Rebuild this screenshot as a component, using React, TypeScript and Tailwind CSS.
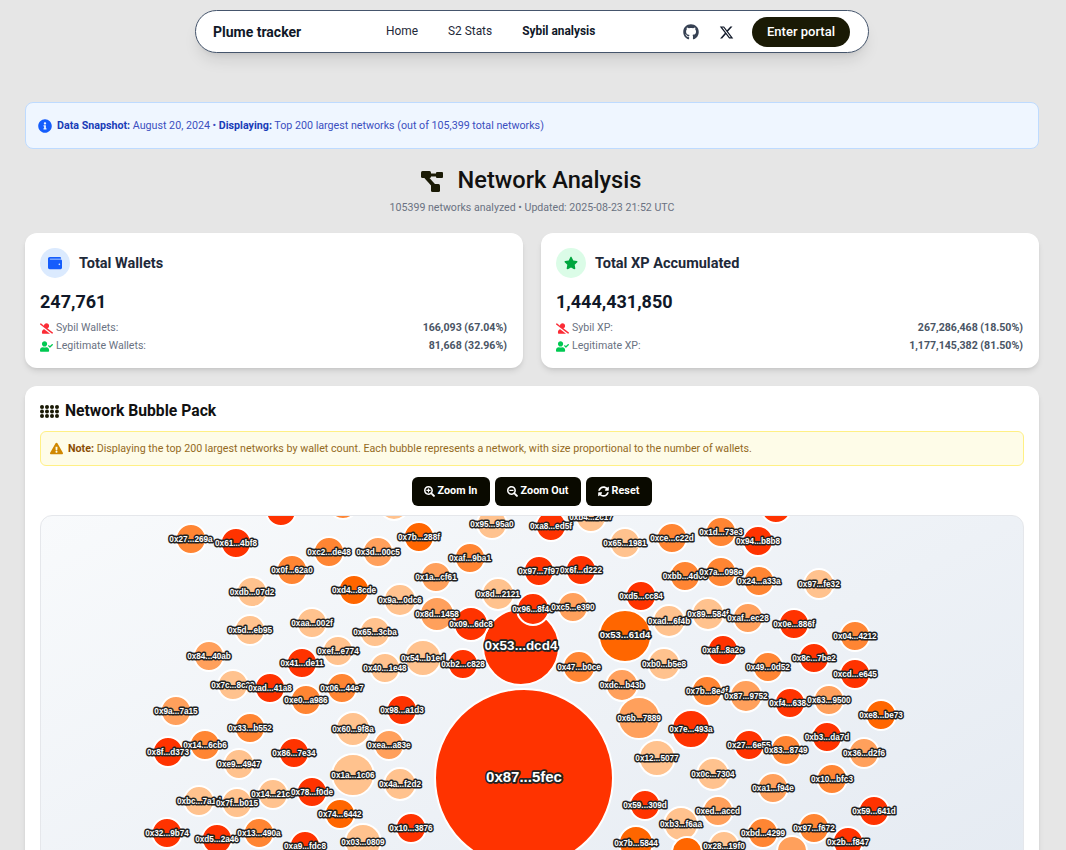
import React from 'react';
import {
  FaExclamationTriangle,
  FaGithub,
  FaInfoCircle,
  FaSearchMinus,
  FaSearchPlus,
  FaStar,
  FaSyncAlt,
  FaUserCheck,
  FaUserSlash,
  FaWallet,
} from 'react-icons/fa';
import { FaXTwitter } from 'react-icons/fa6';

const colors = ['#ff3300', '#ff6600', '#ff8533', '#ffa05c', '#ffc28e'];

// label, cx, cy, r, colour index, font size
type Bubble = [string, number, number, number, number, number?];

const bubbles: Bubble[] = [
  ['', 281, 511, 15, 0],
  ['', 343, 504, 15, 2],
  ['', 394, 505, 15, 4],
  ['', 776, 508, 15, 0],
  ['0x87...5fec', 524, 778, 89, 0, 15],
  ['0x53...dcd4', 521, 647, 38, 0, 13.5],
  ['0x53...61d4', 625, 636, 26, 1, 9.5],
  ['0x27...269a', 191, 539, 15, 2],
  ['0x61...4bf8', 236, 543, 15, 0],
  ['0xc2...de48', 329, 552, 15, 2],
  ['0x3d...00c5', 378, 552, 15, 3],
  ['0x7b...288f', 419, 537, 15, 1],
  ['0x95...95a0', 492, 524, 15, 4],
  ['0xaf...9ba1', 470, 558, 15, 2],
  ['0x0f...62a0', 292, 570, 15, 2],
  ['0x1a...cf61', 436, 577, 15, 3],
  ['0x97...7f97', 539, 571, 15, 0],
  ['0xdb...07d2', 252, 592, 15, 4],
  ['0xd4...8cde', 354, 590, 15, 1],
  ['0x9a...0dc6', 400, 600, 16, 4],
  ['0x8d...2121', 498, 594, 16, 4],
  ['0x8d...1458', 437, 614, 17, 3],
  ['0x09...6dc8', 471, 624, 17, 0],
  ['0x96...8f4e', 533, 609, 16, 0],
  ['0xaa...002f', 312, 623, 15, 4],
  ['0x5d...eb95', 250, 630, 15, 4],
  ['0x65...3cba', 375, 632, 15, 4],
  ['0x84...40ab', 209, 656, 15, 3],
  ['0xef...e774', 338, 651, 15, 4],
  ['0x41...de11', 302, 663, 15, 0],
  ['0x54...b1ed', 423, 658, 18, 4],
  ['0x40...1e48', 385, 668, 15, 4],
  ['0xb2...c828', 463, 664, 15, 0],
  ['0x7c...8c29', 233, 685, 15, 4],
  ['0xad...41a8', 270, 688, 15, 0],
  ['0x06...44e7', 342, 688, 15, 2],
  ['0xe0...a986', 306, 700, 15, 2],
  ['0x9a...7a15', 176, 711, 15, 3],
  ['0x98...a1d3', 402, 710, 15, 0],
  ['0x33...b552', 250, 728, 15, 2],
  ['0x60...9f8a', 353, 729, 17, 4],
  ['0xea...a83e', 389, 745, 15, 3],
  ['0x14...6cb6', 205, 745, 15, 2],
  ['0x8f...d373', 168, 752, 15, 0],
  ['0x86...7e34', 294, 753, 15, 0],
  ['0xe9...4947', 239, 764, 15, 4],
  ['0x1a...1c06', 353, 775, 21, 4],
  ['0x4a...f2d2', 400, 784, 16, 4],
  ['0x14...21c0', 273, 794, 15, 4],
  ['0x78...f0de', 312, 792, 15, 0],
  ['0xbc...7a1d', 199, 801, 15, 4],
  ['0x7f...b015', 237, 803, 15, 4],
  ['0x74...6442', 340, 814, 15, 1],
  ['0x10...3876', 411, 828, 15, 0],
  ['0x32...9b74', 167, 833, 15, 0],
  ['0xd5...2a46', 217, 839, 15, 0],
  ['0x13...490a', 259, 833, 15, 2],
  ['0x03...0809', 363, 842, 18, 4],
  ['0xa9...fdc8', 305, 846, 15, 0],
  ['0xa8...ed5f', 551, 526, 15, 0],
  ['0xb4...2c17', 591, 517, 15, 4],
  ['0x65...1981', 625, 543, 15, 4],
  ['0xce...c22d', 672, 538, 15, 2],
  ['0x1d...73e3', 721, 532, 15, 2],
  ['0x94...b8b8', 758, 541, 15, 0],
  ['0x6f...d222', 581, 570, 15, 0],
  ['0xbb...4d0c', 685, 576, 15, 2],
  ['0x7a...098e', 721, 572, 15, 2],
  ['0x24...a33a', 759, 581, 15, 2],
  ['0x97...fe32', 819, 584, 15, 4],
  ['0xd5...cc84', 641, 596, 15, 0],
  ['0xc5...e390', 573, 607, 15, 3],
  ['0xad...6f4b', 669, 621, 16, 4],
  ['0x89...584f', 708, 614, 16, 4],
  ['0xaf...ec28', 748, 618, 15, 3],
  ['0x0e...886f', 794, 624, 15, 0],
  ['0x04...4212', 855, 636, 15, 2],
  ['0xaf...8a2c', 723, 650, 15, 0],
  ['0xb0...b5e8', 664, 664, 16, 4],
  ['0x47...b0ce', 579, 667, 16, 2],
  ['0x49...0d52', 768, 667, 15, 2],
  ['0x8c...7be2', 814, 658, 15, 0],
  ['0xcd...e645', 855, 674, 15, 0],
  ['0xdc...b43b', 622, 685, 16, 3],
  ['0x7b...8e4f', 707, 691, 15, 2],
  ['0x87...9752', 746, 696, 16, 3],
  ['0xf4...638c', 790, 703, 15, 0],
  ['0x63...9500', 829, 700, 15, 3],
  ['0xe8...be73', 881, 715, 15, 1],
  ['0x6b...7889', 639, 718, 21, 3],
  ['0x7e...493a', 691, 729, 19, 0],
  ['0x27...6e55', 749, 745, 15, 0],
  ['0x83...8749', 786, 750, 15, 2],
  ['0xb3...da7d', 827, 737, 15, 0],
  ['0x36...d2f6', 864, 753, 15, 3],
  ['0x12...5077', 657, 758, 18, 4],
  ['0x0c...7304', 713, 774, 16, 4],
  ['0x10...bfc3', 832, 779, 15, 2],
  ['0xa1...f94e', 773, 788, 15, 3],
  ['0x59...309d', 645, 805, 15, 0],
  ['0x59...641d', 874, 811, 15, 0],
  ['0xed...accd', 718, 811, 15, 3],
  ['0xb3...f6aa', 681, 824, 17, 4],
  ['0xbd...4299', 763, 833, 15, 2],
  ['0x97...f672', 814, 828, 15, 2],
  ['0x2b...f847', 848, 842, 15, 0],
  ['0x7b...5844', 636, 843, 17, 1],
  ['0x28...19f0', 724, 846, 15, 4],
  ['', 687, 852, 15, 1],
  ['', 792, 851, 15, 3],
];

const BubbleChart: React.FC = () => (
  <svg viewBox="41 516 982 498" className="block w-[982px] h-[498px]">
    {bubbles.map(([label, x, y, r, c], i) => (
      <circle key={i} cx={x} cy={y} r={r} fill={colors[c]} stroke="#ffffff" strokeWidth={2} />
    ))}
    {bubbles.map(([label, x, y, , , size], i) =>
      label ? (
        <text
          key={i}
          x={x}
          y={size ? y - 1.5 : y}
          textAnchor="middle"
          dominantBaseline="central"
          fontFamily="'Liberation Sans', sans-serif"
          fontWeight={700}
          fontSize={size ?? 8.2}
          fill="#ffffff"
          stroke="#222222"
          strokeWidth={size ? 3.5 : 3}
          strokeLinejoin="round"
          paintOrder="stroke"
        >
          {label}
        </text>
      ) : null
    )}
  </svg>
);

const BrailleGrid: React.FC = () => (
  <svg viewBox="0 0 19 13" className="w-[19px] h-[13px] text-[#1a1a05]" fill="currentColor">
    {[2, 6.5, 11].flatMap((cy) =>
      [2, 7, 12, 17].map((cx) => <circle key={`${cx}-${cy}`} cx={cx} cy={cy} r={2} />)
    )}
  </svg>
);

const DiagramIcon: React.FC = () => (
  <svg viewBox="0 0 26 21" className="w-[26px] h-[21px] text-[#1a1a05]" fill="currentColor">
    <rect x="1" y="0" width="10" height="7" rx="1.5" />
    <rect x="16" y="1" width="7" height="6" rx="1" />
    <rect x="11" y="13" width="9" height="8" rx="1.5" />
    <path d="M10 2.5h7v3h-7z" />
    <path d="M6 6l9 10" stroke="currentColor" strokeWidth="4" fill="none" />
  </svg>
);

const StatCard: React.FC<{
  icon: React.ReactNode;
  iconBg: string;
  title: string;
  total: string;
  rows: { label: string; value: string }[];
}> = ({ icon, iconBg, title, total, rows }) => (
  <div className="bg-white rounded-xl shadow-md p-[15px] h-[135px]">
    <div className="flex items-center gap-[9px] h-[30px]">
      <div className={`w-[30px] h-[30px] rounded-full flex items-center justify-center ${iconBg}`}>{icon}</div>
      <h3 className="pt-[2px] text-[14.5px] font-bold text-gray-800">{title}</h3>
    </div>
    <div className="mt-[12px] text-[18px] leading-[24px] font-bold text-gray-900">{total}</div>
    <div className="mt-[5px] pr-[1px] text-[10.6px] leading-[18px] text-gray-500">
      <div className="flex items-center justify-between">
        <span className="flex items-center gap-[3px]">
          <FaUserSlash className="w-[13px] h-[11px] text-red-500" />
          {rows[0].label}
        </span>
        <span className="font-bold text-gray-600">{rows[0].value}</span>
      </div>
      <div className="flex items-center justify-between">
        <span className="flex items-center gap-[3px]">
          <FaUserCheck className="w-[13px] h-[11px] text-green-500" />
          {rows[1].label}
        </span>
        <span className="font-bold text-gray-600">{rows[1].value}</span>
      </div>
    </div>
  </div>
);

export default function App() {
  return (
    <div className="h-[850px] overflow-hidden bg-[#e6e6e6] font-['Roboto',sans-serif]">
      <div className="pt-[10px] flex justify-center w-[1064px]">
        {/* Nav pill */}
        <nav className="w-[674px] h-[43px] bg-white rounded-full border border-slate-600 shadow-lg flex items-center pl-[17px] pr-[18px] pt-[1px]">
          <span className="w-[173px] text-[14px] font-bold text-gray-900">Plume tracker</span>
          <div className="flex items-center gap-[30px] text-[11.9px] text-gray-800">
            <span>Home</span>
            <span>S2 Stats</span>
            <span className="font-bold text-gray-900">Sybil analysis</span>
          </div>
          <div className="ml-auto flex items-center">
            <FaGithub className="w-[16px] h-[16px] text-gray-700" />
            <FaXTwitter className="ml-[20px] w-[15px] h-[15px] text-gray-900" />
            <button className="ml-[18px] w-[98px] h-[30px] rounded-full bg-[#1a1a05] text-white text-[13px] font-medium">
              Enter portal
            </button>
          </div>
        </nav>
      </div>

      <main className="w-[1014px] ml-[25px]">
        <div className="mt-[49px] h-[47px] rounded-lg border border-blue-200 bg-blue-50 flex items-center pl-[12px] text-[10.7px] text-[#3b4fc0]">
          <FaInfoCircle className="w-[14px] h-[14px] text-blue-600 mr-[5px]" />
          <p className="pt-[1px]">
            <b className="font-bold text-blue-800">Data Snapshot:</b> August 20, 2024 •{' '}
            <b className="font-bold text-blue-800">Displaying:</b> Top 200 largest networks (out of 105,399 total
            networks)
          </p>
        </div>

        <div className="mt-[16px] text-center">
          <h1 className="h-[32px] pr-[3px] flex items-center justify-center gap-[12px] text-[23.6px] font-medium text-[#111111]">
            <DiagramIcon />
            Network Analysis
          </h1>
          <p className="mt-[3px] text-[10.6px] leading-[16px] text-gray-500">
            105399 networks analyzed • Updated: 2025-08-23 21:52 UTC
          </p>
        </div>

        <div className="mt-[17px] grid grid-cols-2 gap-[18px]">
          <StatCard
            icon={<FaWallet className="w-[14px] h-[14px] text-blue-600" />}
            iconBg="bg-blue-100"
            title="Total Wallets"
            total="247,761"
            rows={[
              { label: 'Sybil Wallets:', value: '166,093 (67.04%)' },
              { label: 'Legitimate Wallets:', value: '81,668 (32.96%)' },
            ]}
          />
          <StatCard
            icon={<FaStar className="w-[14px] h-[14px] text-green-600" />}
            iconBg="bg-green-100"
            title="Total XP Accumulated"
            total="1,444,431,850"
            rows={[
              { label: 'Sybil XP:', value: '267,286,468 (18.50%)' },
              { label: 'Legitimate XP:', value: '1,177,145,382 (81.50%)' },
            ]}
          />
        </div>

        <section className="mt-[18px] bg-white rounded-xl shadow-md px-[15px] pt-[15px] h-[600px]">
          <h2 className="h-[20px] flex items-center gap-[6px] text-[15.7px] font-bold text-[#111111]">
            <BrailleGrid />
            <span>Network Bubble Pack</span>
          </h2>
          <div className="mt-[10px] h-[35px] rounded-md border border-yellow-200 bg-yellow-50 flex items-center pl-[9px] text-[10.7px] text-[#946a1e]">
            <FaExclamationTriangle className="w-[13px] h-[13px] text-yellow-600 mr-[5px]" />
            <p className="pt-[1px]">
              <b className="font-bold text-yellow-800">Note:</b> Displaying the top 200 largest networks by wallet
              count. Each bubble represents a network, with size proportional to the number of wallets.
            </p>
          </div>
          <div className="mt-[11px] flex justify-center gap-[5px] pr-[1px]">
            <button className="w-[78px] h-[29px] rounded-md bg-[#0a0a00] text-white text-[10.8px] font-bold flex items-center justify-center gap-[3px]">
              <FaSearchPlus className="w-[11px] h-[11px]" /> Zoom In
            </button>
            <button className="w-[86px] h-[29px] rounded-md bg-[#0a0a00] text-white text-[10.8px] font-bold flex items-center justify-center gap-[3px]">
              <FaSearchMinus className="w-[11px] h-[11px]" /> Zoom Out
            </button>
            <button className="w-[66px] h-[29px] rounded-md bg-[#0a0a00] text-white text-[10.8px] font-bold flex items-center justify-center gap-[3px]">
              <FaSyncAlt className="w-[11px] h-[11px]" /> Reset
            </button>
          </div>
          <div className="mt-[9px] h-[500px] rounded-xl border border-gray-200 overflow-hidden bg-gradient-to-br from-slate-50 to-slate-200">
            <BubbleChart />
          </div>
        </section>
      </main>
    </div>
  );
}
